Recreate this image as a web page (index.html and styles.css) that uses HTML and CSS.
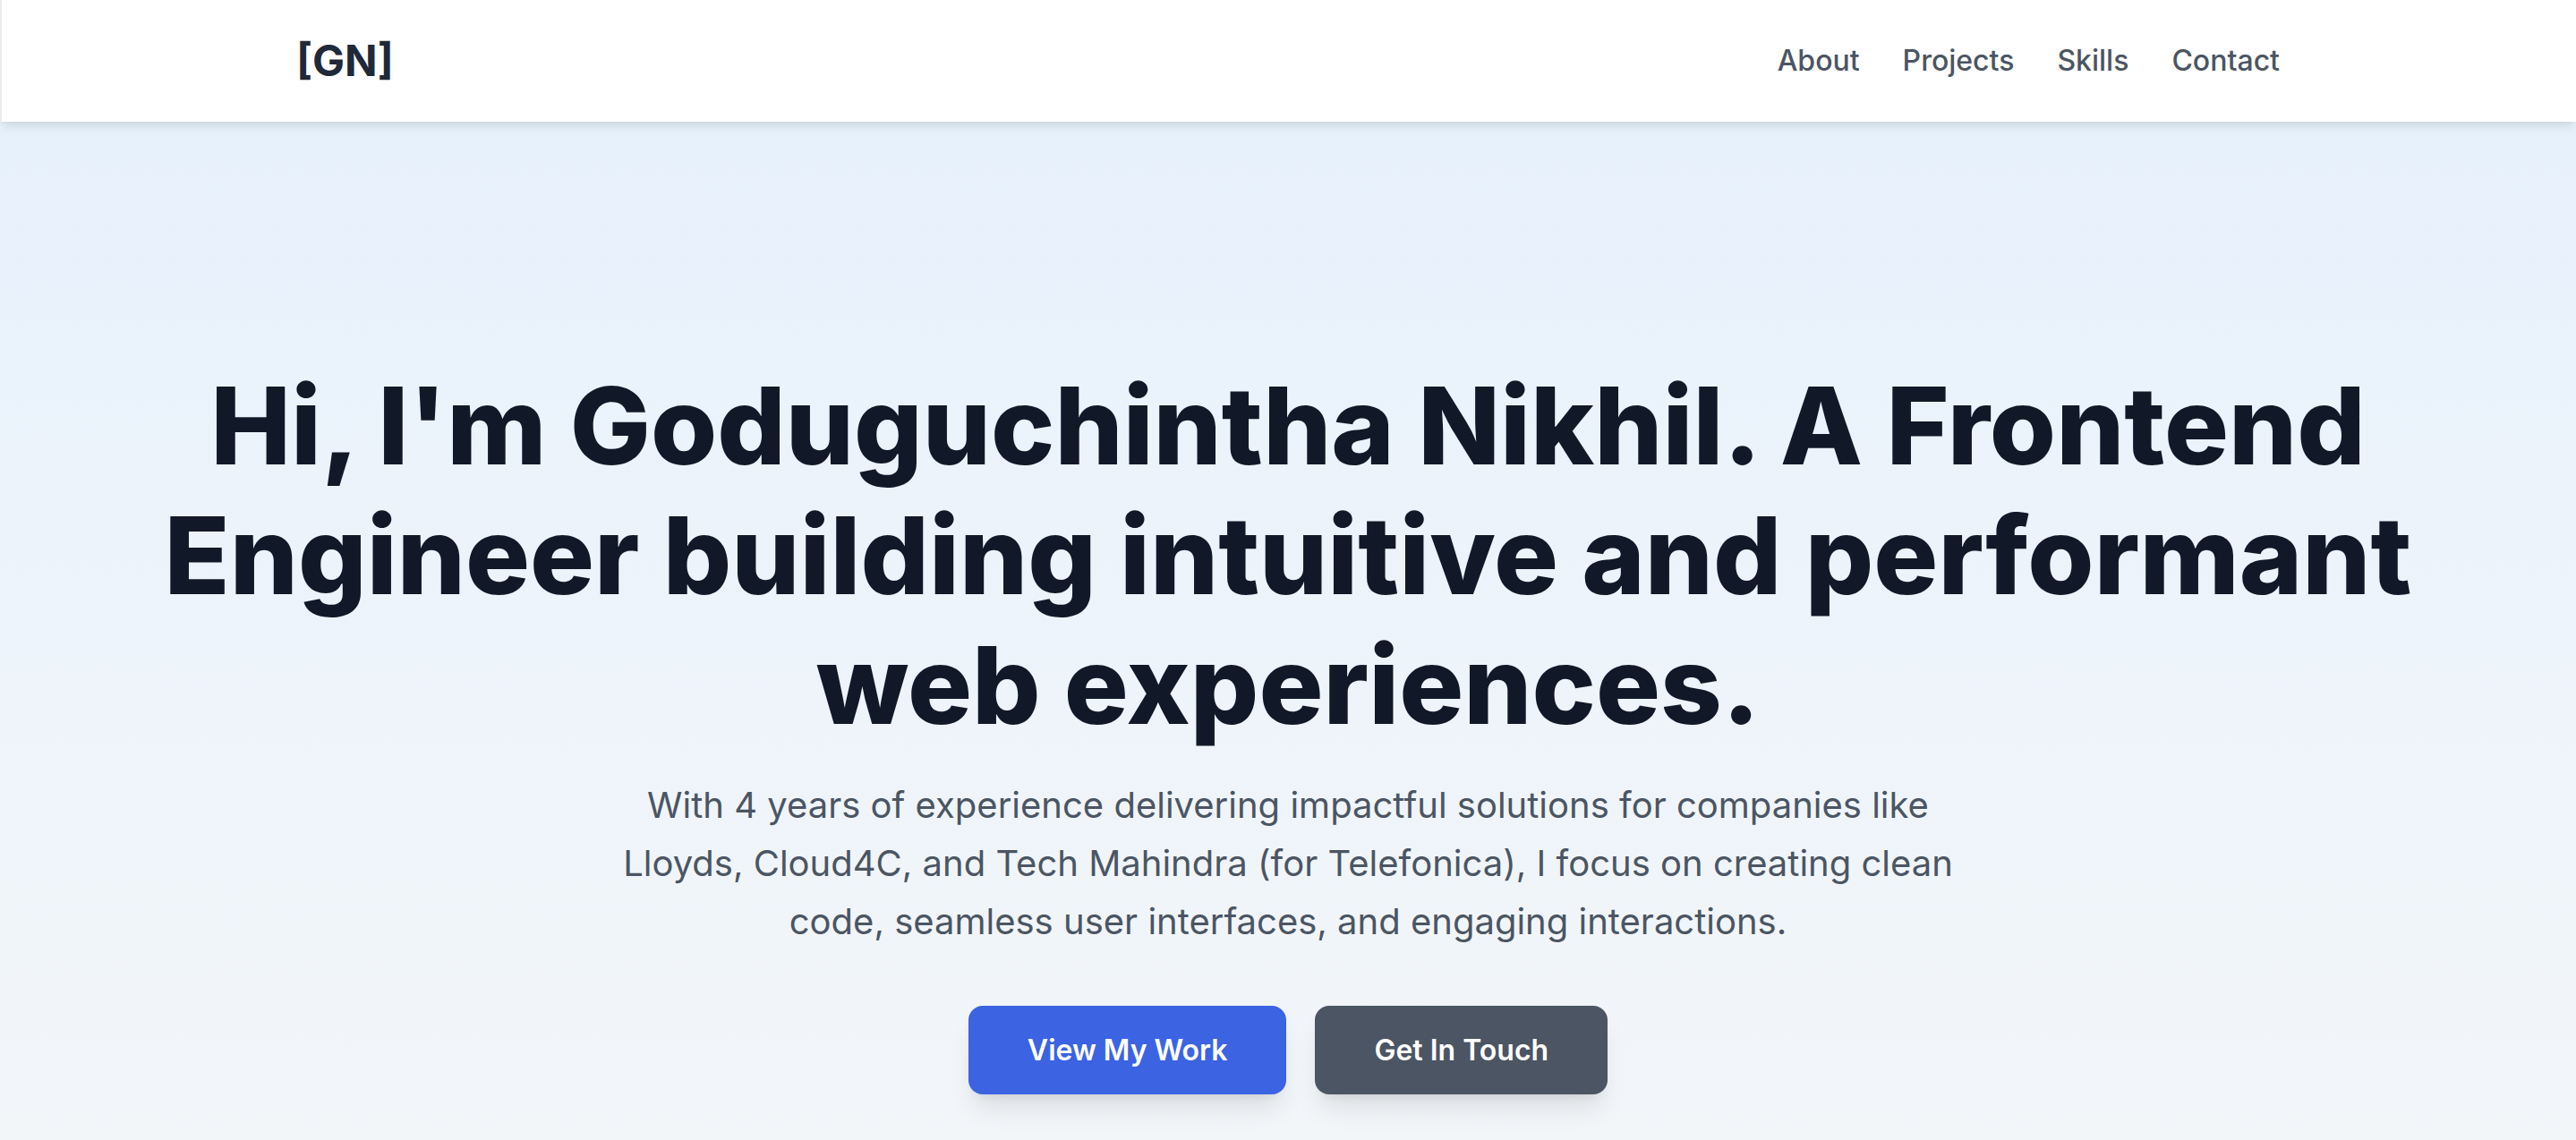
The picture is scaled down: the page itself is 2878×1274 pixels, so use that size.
FILE: index.html
```html
<!DOCTYPE html>
<html lang="en">
<head>
<meta charset="utf-8">
<title>Goduguchintha Nikhil</title>
<link rel="stylesheet" href="styles.css">
</head>
<body>
<header class="site-header">
  <div class="header-inner">
    <a class="logo" href="#">[GN]</a>
    <nav class="nav">
      <a href="#about">About</a>
      <a href="#projects">Projects</a>
      <a href="#skills">Skills</a>
      <a href="#contact">Contact</a>
    </nav>
  </div>
</header>
<main class="hero">
  <h1 class="hero-title">Hi, I'm Goduguchintha Nikhil. A Frontend Engineer building intuitive and performant web experiences.</h1>
  <p class="hero-text">With 4 years of experience delivering impactful solutions for companies like Lloyds, Cloud4C, and Tech Mahindra (for Telefonica), I focus on creating clean code, seamless user interfaces, and engaging interactions.</p>
  <div class="hero-actions">
    <a class="btn btn-primary" href="#projects">View My Work</a>
    <a class="btn btn-secondary" href="#contact">Get In Touch</a>
  </div>
</main>
</body>
</html>
```

FILE: styles.css
```css
* { box-sizing: border-box; }
html, body { margin: 0; padding: 0; }
body {
  font-family: Inter, "Noto Sans", "Liberation Sans", sans-serif;
  background: #f3f6f9;
  min-height: 1274px;
  overflow: hidden;
}
a { text-decoration: none; }

.site-header {
  position: relative;
  z-index: 2;
  height: 136px;
  background: #ffffff;
  box-shadow: inset 2px 0 0 #ececef, 0 8px 12px -2px rgba(0,0,0,0.08), 0 4px 8px -4px rgba(0,0,0,0.08);
}
.header-inner {
  max-width: 2304px;
  height: 100%;
  margin: 0 auto;
  padding: 0 44px;
  display: flex;
  align-items: center;
  justify-content: space-between;
}
.logo {
  font-size: 48px;
  font-weight: 700;
  color: #1f2937;
  line-height: 64px;
}
.nav {
  display: flex;
  gap: 48px;
}
.nav a {
  font-size: 32px;
  font-weight: 500;
  color: #4b5563;
  line-height: 48px;
}

.hero {
  min-height: 1138px;
  background: linear-gradient(180deg, #e7f1fc 0%, #f3f6f9 100%);
  display: flex;
  flex-direction: column;
  align-items: center;
  padding: 267px 48px 0;
  text-align: center;
}
.hero-title {
  margin: 0;
  max-width: 2600px;
  font-size: 120px;
  line-height: 145px;
  font-weight: 800;
  color: #111827;
}
.hero-text {
  margin: 29px 0 0;
  max-width: 1536px;
  font-size: 40px;
  line-height: 65px;
  color: #4b5563;
}
.hero-actions {
  margin-top: 62px;
  display: flex;
  gap: 32px;
}
.btn {
  display: inline-flex;
  align-items: center;
  justify-content: center;
  height: 99px;
  padding: 0 66px;
  border-radius: 16px;
  font-size: 32px;
  font-weight: 600;
  color: #ffffff;
  box-shadow: 0 20px 30px -6px rgba(0,0,0,0.10), 0 8px 12px -8px rgba(0,0,0,0.10);
}
.btn-primary { background: #3b63e2; }
.btn-secondary { background: #4b5563; }
```
